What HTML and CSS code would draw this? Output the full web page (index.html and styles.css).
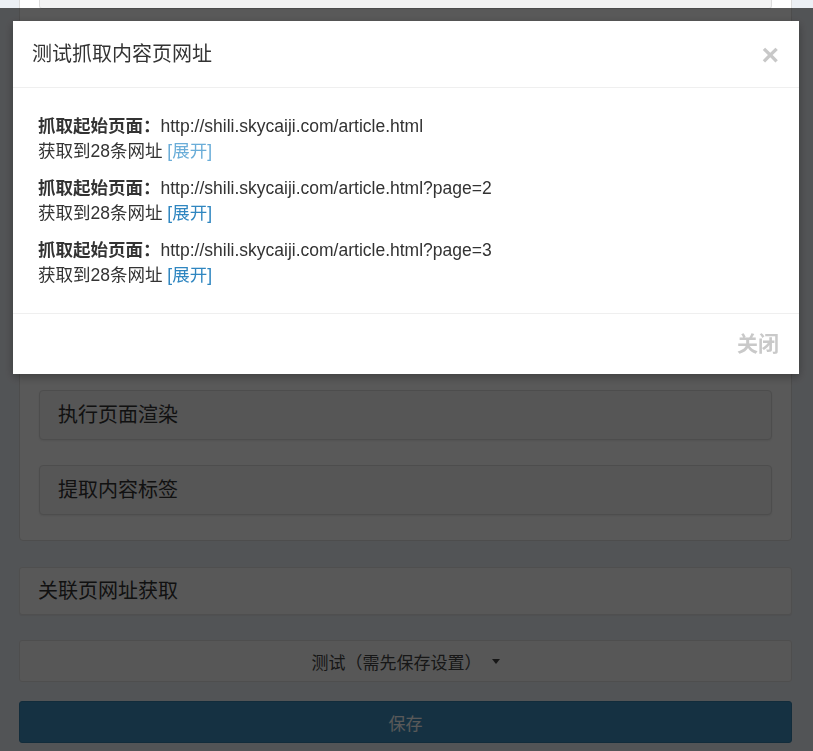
FILE: index.html
```html
<!DOCTYPE html>
<html lang="zh-CN">
<head>
<meta charset="utf-8">
<title>测试抓取内容页网址</title>
<link rel="stylesheet" href="styles.css">
</head>
<body>
<div class="page">
  <div class="panel-main">
    <div class="field-box"></div>
    <div class="spacer"></div>
    <div class="sub-box">执行页面渲染</div>
    <div class="sub-box">提取内容标签</div>
  </div>
  <div class="panel-link">关联页网址获取</div>
  <button class="btn-test">测试（需先保存设置）<span class="caret"></span></button>
  <button class="btn-save">保存</button>
</div>

<div class="backdrop"></div>

<div class="modal">
  <div class="modal-header">
    <h4 class="modal-title">测试抓取内容页网址</h4>
    <span class="close">×</span>
  </div>
  <div class="modal-body">
    <div class="result">
      <div><b>抓取起始页面：</b><span class="url">http://shili.skycaiji.com/article.html</span></div>
      <div>获取到28条网址 <a class="toggle toggle-active">[展开]</a></div>
    </div>
    <div class="result">
      <div><b>抓取起始页面：</b><span class="url">http://shili.skycaiji.com/article.html?page=2</span></div>
      <div>获取到28条网址 <a class="toggle">[展开]</a></div>
    </div>
    <div class="result">
      <div><b>抓取起始页面：</b><span class="url">http://shili.skycaiji.com/article.html?page=3</span></div>
      <div>获取到28条网址 <a class="toggle">[展开]</a></div>
    </div>
  </div>
  <div class="modal-footer">
    <span class="btn-close">关闭</span>
  </div>
</div>
</body>
</html>
```
FILE: styles.css
```css
* { box-sizing: border-box; }
html, body { margin: 0; padding: 0; }
body {
  background: #ecf0f5;
  font-family: "Liberation Sans", "Noto Sans CJK SC", sans-serif;
  color: #333;
  overflow: hidden;
  height: 751px;
}
.page {
  padding: 0 21px 0 19px;
  display: flex;
  flex-direction: column;
}
.panel-main {
  margin-top: -50px;
  background: #fff;
  border: 1px solid #dcdcdc;
  border-radius: 4px;
  padding: 14px 19px 25px;
}
.field-box {
  height: 44px;
  background: #f3f3f3;
  border: 1px solid #ddd;
  border-radius: 3px;
}
.spacer { height: 381px; }
.sub-box {
  height: 50px;
  line-height: 48px;
  padding: 0 18px;
  font-size: 20px;
  background: #f5f5f5;
  border: 1px solid #ddd;
  border-radius: 4px;
  box-shadow: 0 1px 2px rgba(0,0,0,.08);
}
.sub-box + .sub-box { margin-top: 25px; }
.panel-link {
  margin-top: 26px;
  height: 48px;
  line-height: 46px;
  padding: 0 18px;
  font-size: 20px;
  background: #fcfcfc;
  border: 1px solid #e2e2e2;
  border-radius: 3px;
  box-shadow: 0 1px 1px rgba(0,0,0,.05);
}
.btn-test, .btn-save {
  font-family: inherit;
  height: 42px;
  font-size: 17px;
  border-radius: 3px;
  display: flex;
  align-items: center;
  justify-content: center;
}
.btn-test {
  margin-top: 25px;
  background: #f9f9f9;
  border: 1px solid #e0e0e0;
  color: #444;
}
.caret {
  display: inline-block;
  margin-left: 10px;
  border-top: 5px solid #444;
  border-left: 4px solid transparent;
  border-right: 4px solid transparent;
}
.btn-save {
  margin-top: 19px;
  background: #3c8dbc;
  border: 1px solid #367fa9;
  color: #fff;
}
.backdrop {
  position: fixed;
  top: 8px; left: 0; right: 0; bottom: 0;
  background: rgba(0,0,0,.65);
}
.modal {
  position: fixed;
  top: 21px;
  left: 13px;
  width: 786px;
  background: #fff;
  box-shadow: 0 3px 9px rgba(0,0,0,.3);
}
.modal-header {
  display: flex;
  align-items: center;
  justify-content: space-between;
  padding: 21px 19px 20px 19px;
  border-bottom: 1px solid #efefef;
}
.modal-title {
  margin: 0;
  font-size: 20px;
  font-weight: normal;
  line-height: 25px;
  color: #333;
}
.close {
  font-size: 30px;
  font-weight: bold;
  line-height: 25px;
  color: #c8c8c8;
  margin-right: 1px;
}
.modal-body {
  padding: 26px 25px 13px;
  font-size: 17.5px;
  line-height: 25px;
}
.result { margin-bottom: 12px; }
.result b { font-weight: bold; }
.toggle { color: #2f86c0; }
.toggle-active { color: #6aadd8; }
.modal-footer {
  border-top: 1px solid #efefef;
  padding: 15px 20px;
  display: flex;
  justify-content: flex-end;
}
.btn-close {
  font-size: 21px;
  font-weight: bold;
  line-height: 30px;
  color: #c9c9c9;
}
```
